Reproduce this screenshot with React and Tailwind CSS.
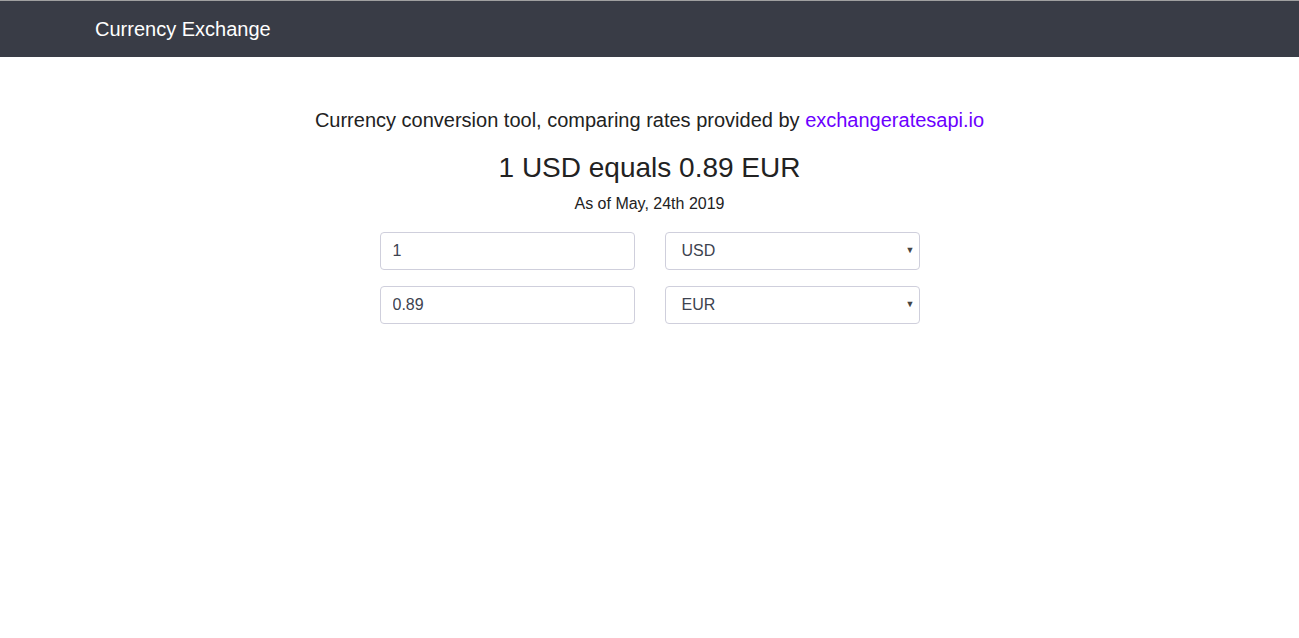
import { useState } from 'react';

const currencies = ['USD', 'EUR', 'GBP', 'JPY', 'CAD'];

const CurrencyRow = ({ amount, currency, onAmount, onCurrency }) => (
    <div className="grid grid-cols-2 gap-[30px]">
        <input
            type="text"
            value={amount}
            onChange={(e) => onAmount(e.target.value)}
            className="h-[38px] w-full rounded border border-[#cfcfdc] px-3 text-base text-[#3d4350] outline-none"
        />
        <div className="relative">
            <select
                value={currency}
                onChange={(e) => onCurrency(e.target.value)}
                className="h-[38px] w-full appearance-none rounded border border-[#cfcfdc] bg-white pl-4 pr-8 text-base text-[#3d4350] outline-none"
            >
                {currencies.map((c) => (
                    <option key={c} value={c}>{c}</option>
                ))}
            </select>
            <span className="pointer-events-none absolute right-[5px] top-1/2 -translate-y-1/2 text-[9px] text-[#444]">▼</span>
        </div>
    </div>
);

const App = () => {
    const [from, setFrom] = useState({ amount: '1', currency: 'USD' });
    const [to, setTo] = useState({ amount: '0.89', currency: 'EUR' });

    return (
        <div className="min-h-screen bg-white font-['Liberation_Sans',Arial,sans-serif] text-[#222]">
            <header className="h-[57px] border-t border-[#a0a0a0] bg-[#393c46]">
                <div className="flex h-full items-center pl-[95px] text-[20px] text-white">
                    Currency Exchange
                </div>
            </header>

            <main className="mx-auto flex w-[540px] flex-col items-center pt-[50px]">
                <p className="whitespace-nowrap text-[20px] leading-[26px]">
                    Currency conversion tool, comparing rates provided by{' '}
                    <a href="#" className="text-[#6c00ff]">exchangeratesapi.io</a>
                </p>
                <h1 className="mt-[19px] text-[28px] leading-[32px]">
                    1 {from.currency} equals {to.amount} {to.currency}
                </h1>
                <p className="mt-[10px] text-[16px] leading-[20px]">As of May, 24th 2019</p>

                <div className="mt-[18px] flex w-full flex-col gap-4">
                    <CurrencyRow
                        amount={from.amount}
                        currency={from.currency}
                        onAmount={(v) => setFrom({ ...from, amount: v })}
                        onCurrency={(v) => setFrom({ ...from, currency: v })}
                    />
                    <CurrencyRow
                        amount={to.amount}
                        currency={to.currency}
                        onAmount={(v) => setTo({ ...to, amount: v })}
                        onCurrency={(v) => setTo({ ...to, currency: v })}
                    />
                </div>
            </main>
        </div>
    );
};

export default App;
